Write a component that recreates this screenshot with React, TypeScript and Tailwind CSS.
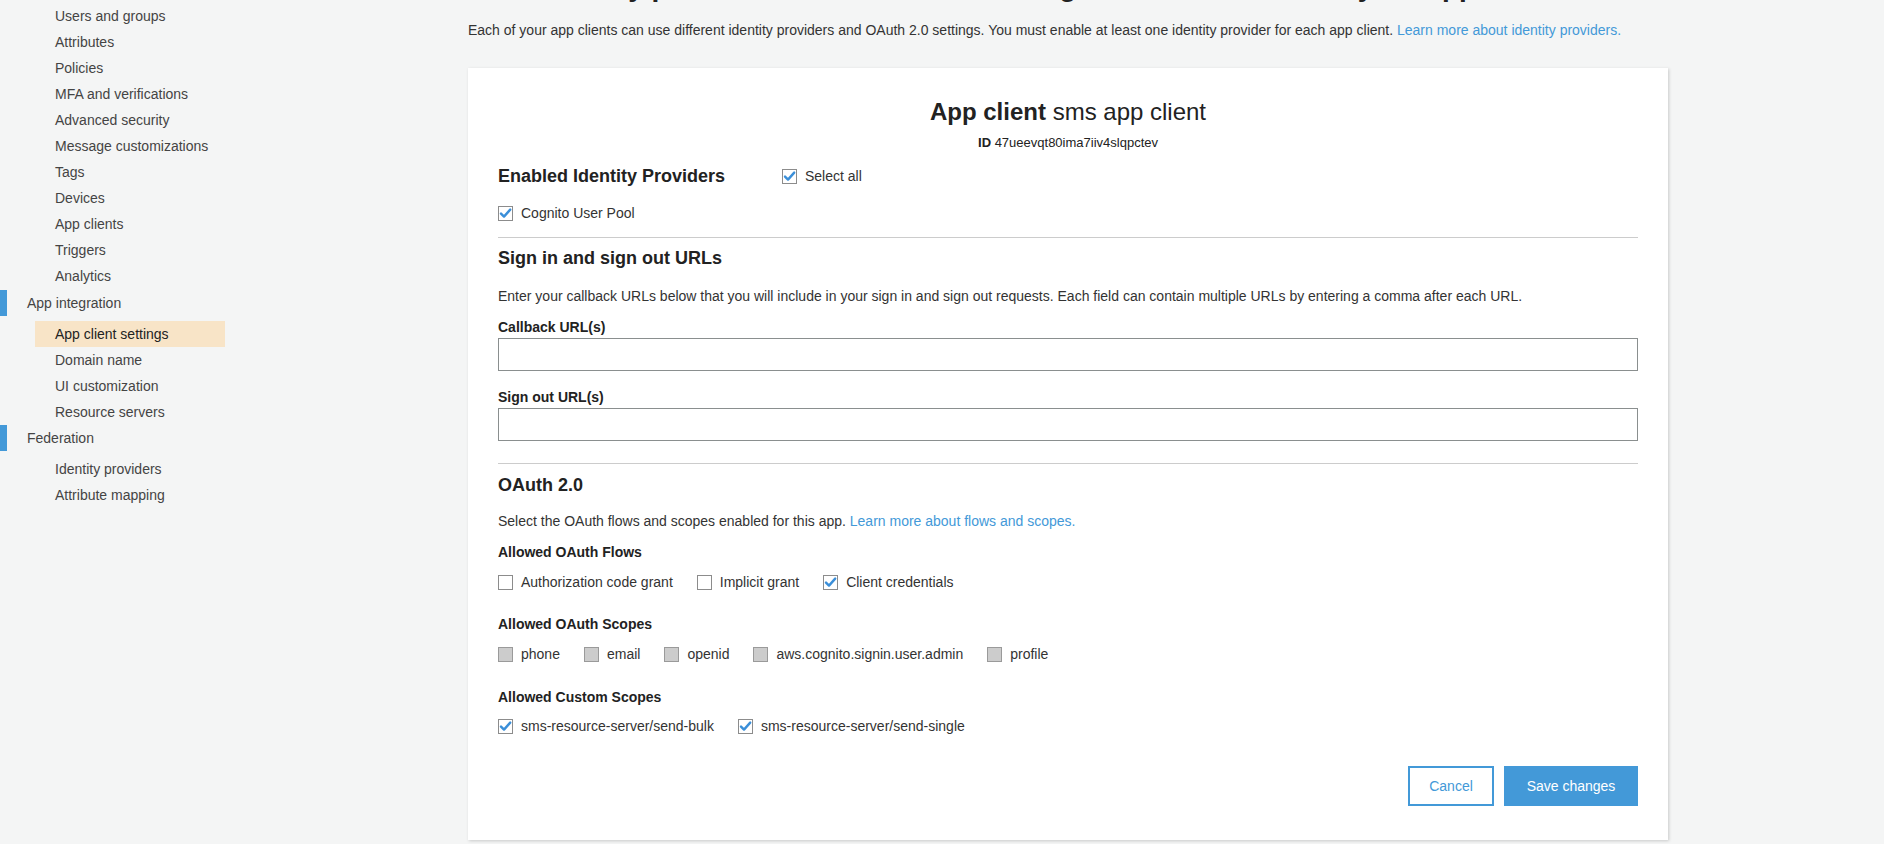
import React from "react";

const FONT = { fontFamily: '"Liberation Sans", Arial, sans-serif' };

type Box = "on" | "off" | "disabled";

function CheckBox({ state }: { state: Box }) {
  if (state === "disabled") {
    return <span className="block w-[15px] h-[15px] border border-[#9a9a9a] bg-[#cccccc] shrink-0" />;
  }
  return (
    <span className="relative block w-[15px] h-[15px] border border-[#8c8c8c] bg-white shrink-0">
      {state === "on" && (
        <svg viewBox="0 0 15 15" className="absolute -left-px -top-px w-[15px] h-[15px]">
          <path d="M3 7.6 L6 10.6 L12.2 3.6" fill="none" stroke="#3b8fd9" strokeWidth="2.4" strokeLinecap="round" strokeLinejoin="round" />
        </svg>
      )}
    </span>
  );
}

function Check({ state, label, className = "" }: { state: Box; label: string; className?: string }) {
  return (
    <div className={`flex items-center h-5 mr-6 ${className}`}>
      <CheckBox state={state} />
      <span className="ml-2 text-[14px] text-[#333]">{label}</span>
    </div>
  );
}

const sideTop = [
  "Users and groups",
  "Attributes",
  "Policies",
  "MFA and verifications",
  "Advanced security",
  "Message customizations",
  "Tags",
  "Devices",
  "App clients",
  "Triggers",
  "Analytics",
];

function SideItem({ label, active = false }: { label: string; active?: boolean }) {
  return (
    <div className={`ml-[35px] w-[190px] h-[26px] leading-[26px] pl-[20px] text-[14px] ${active ? "bg-[#f8e4c7] text-[#222]" : "text-[#444]"}`}>
      {label}
    </div>
  );
}

function SideGroup({ label }: { label: string }) {
  return (
    <div className="flex h-[26px] items-center">
      <span className="w-[7px] h-[26px] bg-[#4399d8]" />
      <span className="ml-[20px] text-[14px] text-[#444]">{label}</span>
    </div>
  );
}

export default function App() {
  return (
    <div className="flex w-full min-h-[844px] h-[844px] overflow-hidden bg-[#f4f5f5]" style={FONT}>
      {/* sidebar */}
      <aside className="w-[252px] shrink-0 pt-[3px]">
        {sideTop.map((s) => (
          <SideItem key={s} label={s} />
        ))}
        <div className="mt-px" />
        <SideGroup label="App integration" />
        <div className="mt-[5px]" />
        <SideItem label="App client settings" active />
        <SideItem label="Domain name" />
        <SideItem label="UI customization" />
        <SideItem label="Resource servers" />
        <SideGroup label="Federation" />
        <div className="mt-[5px]" />
        <SideItem label="Identity providers" />
        <SideItem label="Attribute mapping" />
      </aside>

      {/* main */}
      <main className="flex-1">
        <div className="w-[1200px] mx-auto">
          <h1 className="-mt-[30px] h-[34px] leading-[34px] text-[28px] font-bold text-[#222] whitespace-nowrap overflow-hidden">
            What identity providers and OAuth 2.0 settings should be used for your app clients?
          </h1>
          <p className="mt-[16px] leading-[20px] text-[14px] text-[#333] whitespace-nowrap">
            Each of your app clients can use different identity providers and OAuth 2.0 settings. You must enable at least one identity provider for each app client.{" "}
            <a className="text-[#4399d8]">Learn more about identity providers.</a>
          </p>

          {/* card */}
          <section className="mt-[28px] bg-white px-[30px] pt-[28px] pb-[34px] shadow-[1px_1px_3px_rgba(0,0,0,0.18)]">
            <div className="text-center text-[24px] leading-[32px] text-[#222]">
              <span className="font-bold">App client</span> sms app client
            </div>
            <div className="mt-[5px] text-center text-[13px] leading-[20px] text-[#222]">
              <span className="font-bold">ID</span> 47ueevqt80ima7iiv4slqpctev
            </div>

            <div className="mt-[11px] flex items-center h-6">
              <h2 className="w-[284px] text-[18px] font-bold text-[#222]">Enabled Identity Providers</h2>
              <Check state="on" label="Select all" />
            </div>
            <div className="mt-[15px] flex">
              <Check state="on" label="Cognito User Pool" />
            </div>

            <div className="mt-[14px] border-t border-[#cccccc]" />

            <h2 className="mt-[8px] leading-[24px] text-[18px] font-bold text-[#222]">Sign in and sign out URLs</h2>
            <p className="mt-[16px] leading-[20px] text-[14px] text-[#333]">
              Enter your callback URLs below that you will include in your sign in and sign out requests. Each field can contain multiple URLs by entering a comma after each URL.
            </p>
            <label className="block mt-[11px] leading-[20px] text-[14px] font-bold text-[#222]">Callback URL(s)</label>
            <input className="block mt-px w-full h-[33px] border border-[#8a8f8f] bg-white outline-none" />
            <label className="block mt-[16px] leading-[20px] text-[14px] font-bold text-[#222]">Sign out URL(s)</label>
            <input className="block mt-px w-full h-[33px] border border-[#8a8f8f] bg-white outline-none" />

            <div className="mt-[22px] border-t border-[#cccccc]" />

            <h2 className="mt-[9px] leading-[24px] text-[18px] font-bold text-[#222]">OAuth 2.0</h2>
            <p className="mt-[14px] leading-[20px] text-[14px] text-[#333]">
              Select the OAuth flows and scopes enabled for this app.{" "}
              <a className="text-[#4399d8]">Learn more about flows and scopes.</a>
            </p>

            <div className="mt-[11px] leading-[20px] text-[14px] font-bold text-[#222]">Allowed OAuth Flows</div>
            <div className="mt-[10px] flex">
              <Check state="off" label="Authorization code grant" />
              <Check state="off" label="Implicit grant" />
              <Check state="on" label="Client credentials" />
            </div>

            <div className="mt-[22px] leading-[20px] text-[14px] font-bold text-[#222]">Allowed OAuth Scopes</div>
            <div className="mt-[10px] flex">
              <Check state="disabled" label="phone" />
              <Check state="disabled" label="email" />
              <Check state="disabled" label="openid" />
              <Check state="disabled" label="aws.cognito.signin.user.admin" />
              <Check state="disabled" label="profile" />
            </div>

            <div className="mt-[23px] leading-[20px] text-[14px] font-bold text-[#222]">Allowed Custom Scopes</div>
            <div className="mt-[9px] flex">
              <Check state="on" label="sms-resource-server/send-bulk" />
              <Check state="on" label="sms-resource-server/send-single" />
            </div>

            <div className="mt-[30px] flex justify-end gap-[10px]">
              <button className="w-[86px] h-[40px] border-2 border-[#4399d8] bg-white text-[14px] text-[#4399d8]">Cancel</button>
              <button className="w-[134px] h-[40px] bg-[#4399d8] text-[14px] text-white">Save changes</button>
            </div>
          </section>
        </div>
      </main>
    </div>
  );
}
